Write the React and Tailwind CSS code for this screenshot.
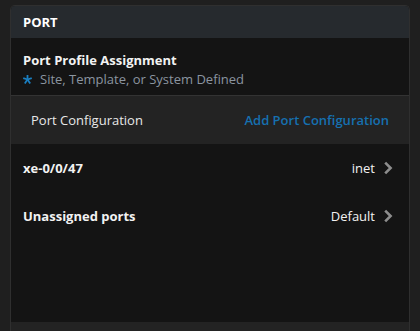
import React from 'react';

const Chevron = () => (
  <svg width="10" height="14" viewBox="0 0 10 14" className="ml-[8px]">
    <path d="M2.2 1.6 L7.6 7 L2.2 12.4" fill="none" stroke="#8d8d8d" strokeWidth="2.6" />
  </svg>
);

const PortRow = ({ name, value }) => (
  <div className="h-[48px] flex items-center justify-between pl-[12px] pr-[16px]">
    <span className="font-bold text-[#f2f2f2]">{name}</span>
    <span className="flex items-center text-[#f2f2f2]">
      {value}
      <Chevron />
    </span>
  </div>
);

export default function App() {
  return (
    <div
      className="h-[331px] w-[420px] bg-[#1f1f1f] pt-[5px] pl-[10px] text-[13px] leading-[18px]"
      style={{ fontFamily: '"Open Sans", "Noto Sans", sans-serif' }}
    >
      <div className="w-[400px] h-[326px] flex flex-col bg-[#141414] border-x border-t border-[#2f2f2f] rounded-t-[5px] overflow-hidden">
        {/* Header */}
        <div className="h-[32px] shrink-0 flex items-center px-[12px] bg-[#262a2e]">
          <span className="font-bold text-white">PORT</span>
        </div>

        {/* Profile assignment */}
        <div className="pt-[13px] pb-[7px] px-[12px] border-b border-[#333333]">
          <div className="font-bold text-[#f2f2f2]">Port Profile Assignment</div>
          <div className="mt-[1px] flex items-center text-[#8b95a0]">
            <span className="w-[17px] h-[18px] flex items-center">
              <svg width="9" height="9" viewBox="0 0 10 10" className="mt-[1px]">
                <g stroke="#1a7fc1" strokeWidth="2" strokeLinecap="butt">
                  <line x1="5" y1="0" x2="5" y2="5.2" />
                  <line x1="5" y1="5" x2="0.3" y2="3.4" />
                  <line x1="5" y1="5" x2="9.7" y2="3.4" />
                  <line x1="5" y1="5" x2="2" y2="9.4" />
                  <line x1="5" y1="5" x2="8" y2="9.4" />
                </g>
              </svg>
            </span>
            <span>Site, Template, or System Defined</span>
          </div>
        </div>

        {/* Port configuration bar */}
        <div className="h-[48px] shrink-0 flex items-center justify-between pl-[20px] pr-[20px] bg-[#232323]">
          <span className="text-[#e8e8e8]">Port Configuration</span>
          <span className="font-semibold text-[#1670b0]">Add Port Configuration</span>
        </div>

        <PortRow name="xe-0/0/47" value="inet" />
        <PortRow name="Unassigned ports" value="Default" />

        <div className="flex-1" />
        <div className="h-[9px] shrink-0 bg-[#232323]" />
      </div>
    </div>
  );
}
